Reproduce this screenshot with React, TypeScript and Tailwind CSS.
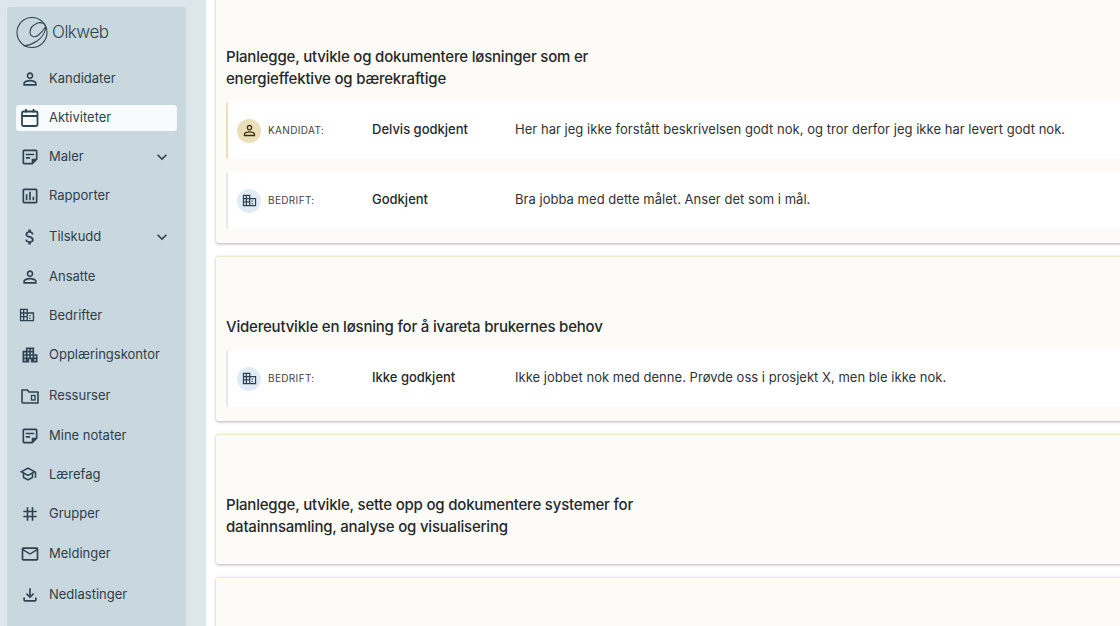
import React from 'react';
import {
  MdPersonOutline,
  MdOutlineStickyNote2,
  MdOutlineAssessment,
  MdAttachMoney,
  MdApartment,
  MdOutlineSchool,
  MdTag,
  MdMailOutline,
  MdOutlineFileDownload,
  MdKeyboardArrowDown,
} from 'react-icons/md';

const CalendarIcon = () => (
  <svg width="20" height="20" viewBox="0 0 20 20" fill="none" stroke="currentColor" strokeWidth="1.8">
    <rect x="2" y="3.500" width="15.500" height="14.500" rx="1.500" />
    <path d="M2 8h15.500M6 1v3.500M13.500 1v3.500" />
  </svg>
);

const CompanyIcon = ({ size = 18 }: { size?: number }) => (
  <svg width={size} height={size} viewBox="0 0 18 18" fill="currentColor">
    <path d="M1 2h9v4h7v10H1V2zm1.500 1.500V6h2V3.500h-2zm3.500 0V6h2.500V3.500H6zM2.500 7.500V10h2V7.500h-2zm3.500 0V10h2.500V7.500H6zM2.500 11.500V14.500h2v-3h-2zm3.500 0v3h2.500v-3H6zm4-4v7h5.500v-7H10zm1.500 1.500h1.500v1.500h-1.500V9zm0 3h1.500v1.500h-1.500V12z" fillRule="evenodd" />
  </svg>
);

const FolderIcon = () => (
  <svg width="20" height="20" viewBox="0 0 20 20" fill="none" stroke="currentColor" strokeWidth="1.6">
    <path d="M2 4h5.500l1.500 2h9v11H3a1 1 0 0 1-1-1V4z" strokeLinejoin="round" />
    <rect x="11.500" y="9.500" width="3.500" height="4.500" strokeWidth="1.300" />
  </svg>
);

const Logo = () => (
  <svg width="34" height="34" viewBox="0 0 34 34" fill="none" stroke="#2f4550" strokeWidth="1.100">
    <circle cx="16" cy="16.500" r="15" />
    <path d="M7.500 30C16 29 27 24 29.500 13C30.500 7 25 6 21.500 7C17 9 14 12 14 16C14 21 19 22 22.500 19C25 17 27.500 14 29.500 11" />
  </svg>
);

type NavItem = { label: string; icon: React.ReactNode; gap: string; chevron?: boolean; active?: boolean };

const navItems: NavItem[] = [
  { label: 'Kandidater', icon: <MdPersonOutline size={20} />, gap: 'mt-0' },
  { label: 'Aktiviteter', icon: <CalendarIcon />, gap: 'mt-0', active: true },
  { label: 'Maler', icon: <MdOutlineStickyNote2 size={20} />, gap: 'mt-0', chevron: true },
  { label: 'Rapporter', icon: <MdOutlineAssessment size={20} />, gap: 'mt-0' },
  { label: 'Tilskudd', icon: <MdAttachMoney size={20} />, gap: 'mt-[2px]', chevron: true },
  { label: 'Ansatte', icon: <MdPersonOutline size={20} />, gap: 'mt-[1px]' },
  { label: 'Bedrifter', icon: <span className="-mt-[3px] -ml-[1px]"><CompanyIcon size={16} /></span>, gap: 'mt-0' },
  { label: 'Opplæringskontor', icon: <MdApartment size={20} />, gap: 'mt-0' },
  { label: 'Ressurser', icon: <FolderIcon />, gap: 'mt-[2px]' },
  { label: 'Mine notater', icon: <MdOutlineStickyNote2 size={20} />, gap: 'mt-[1px]' },
  { label: 'Lærefag', icon: <span className="-mt-[3px] -ml-[1px]"><MdOutlineSchool size={18} /></span>, gap: 'mt-0' },
  { label: 'Grupper', icon: <MdTag size={20} />, gap: 'mt-0' },
  { label: 'Meldinger', icon: <MdMailOutline size={20} />, gap: 'mt-[1px]' },
  { label: 'Nedlastinger', icon: <MdOutlineFileDownload size={20} />, gap: 'mt-[2px]' },
];

const Sidebar = () => (
  <aside className="w-[179px] shrink-0 bg-[#c9d7df] rounded-t-[3px] mt-[7px] ml-[7px] h-[619px] overflow-hidden">
    <div className="pl-[9px] pt-[9px]">
      <div className="flex items-center h-[34px] text-[17px] font-light text-[#2f4550] tracking-[-0.5px]">
        <Logo />
        <span className="ml-[2px]">Olkweb</span>
      </div>
    </div>
    <nav className="mt-[16px] flex flex-col gap-[13px] px-[9px]">
      {navItems.map(item => (
        <div
          key={item.label}
          className={`${item.gap} flex items-center h-[26px] rounded-[3px] pl-[4px] pr-[5px] text-[13px] text-[#2f3f4a] ${item.active ? 'bg-[#f8fbfd]' : ''}`}
        >
          <span className="w-[29px] flex items-center text-[#2d4352]">{item.icon}</span>
          <span>{item.label}</span>
          {item.chevron && <MdKeyboardArrowDown size={20} className="ml-auto text-[#2d4352]" />}
        </div>
      ))}
    </nav>
  </aside>
);

type Answer = { who: 'kandidat' | 'bedrift'; status: string; text: string };

const Row = ({ who, status, text }: Answer) => (
  <div className={`flex items-center h-[57px] pl-[9px] rounded-l-[3px] bg-white border-l-2 ${who === 'kandidat' ? 'border-[#eadfba]' : 'border-[#e6e6e4]'}`}>
    <span className={`w-[24px] h-[24px] rounded-full flex items-center justify-center ${who === 'kandidat' ? 'bg-[#eadfba] text-[#3f3208]' : 'bg-[#e0ebf6] text-[#2d4352]'}`}>
      {who === 'kandidat' ? <MdPersonOutline size={17} /> : <CompanyIcon size={15} />}
    </span>
    <span className="ml-[7px] w-[104px] text-[10px] tracking-[0.35px] text-[#444] uppercase">{who === 'kandidat' ? 'Kandidat:' : 'Bedrift:'}</span>
    <span className="w-[143px] -mt-[2px] text-[13px] font-[450] text-[#26292b]">{status}</span>
    <span className="-mt-[2px] text-[13px] tracking-[0.03px] text-[#303335] whitespace-nowrap">{text}</span>
  </div>
);

const Card = ({ title, answers, tall }: { title: string; answers?: Answer[]; tall?: boolean }) => (
  <section className={`bg-[#fcfbf7] rounded-[3px] shadow-[0_1px_3px_rgba(0,0,0,0.3)] pl-[10px] border-t border-[#f3e8cc] pt-[59px] ${answers ? 'pb-[14px]' : 'pb-[26px]'} ${tall ? 'h-[100px]' : ''}`}>
    <h2 className="text-[15px] leading-[22px] font-[450] tracking-[-0.2px] text-[#26292b] w-[430px]">{title}</h2>
    {answers && (
      <div className="mt-[12px] flex flex-col gap-[13px]">
        {answers.map(a => <Row key={a.who + a.status} {...a} />)}
      </div>
    )}
  </section>
);

export default function App() {
  return (
    <div className="w-[1120px] h-[626px] overflow-hidden flex bg-white font-['Inter',sans-serif]">
      <div className="w-[206px] shrink-0 bg-[#dce6eb] flex items-start">
        <Sidebar />
      </div>
      <main className="flex-1 pl-[10px] min-w-0 overflow-hidden">
        <div className="-mt-[14px] w-[920px] flex flex-col gap-[13px]">
          <Card
            title="Planlegge, utvikle og dokumentere løsninger som er energieffektive og bærekraftige"
            answers={[
              { who: 'kandidat', status: 'Delvis godkjent', text: 'Her har jeg ikke forstått beskrivelsen godt nok, og tror derfor jeg ikke har levert godt nok.' },
              { who: 'bedrift', status: 'Godkjent', text: 'Bra jobba med dette målet. Anser det som i mål.' },
            ]}
          />
          <Card
            title="Videreutvikle en løsning for å ivareta brukernes behov"
            answers={[
              { who: 'bedrift', status: 'Ikke godkjent', text: 'Ikke jobbet nok med denne. Prøvde oss i prosjekt X, men ble ikke nok.' },
            ]}
          />
          <Card title="Planlegge, utvikle, sette opp og dokumentere systemer for datainnsamling, analyse og visualisering" />
          <Card tall title="" />
        </div>
      </main>
    </div>
  );
}
